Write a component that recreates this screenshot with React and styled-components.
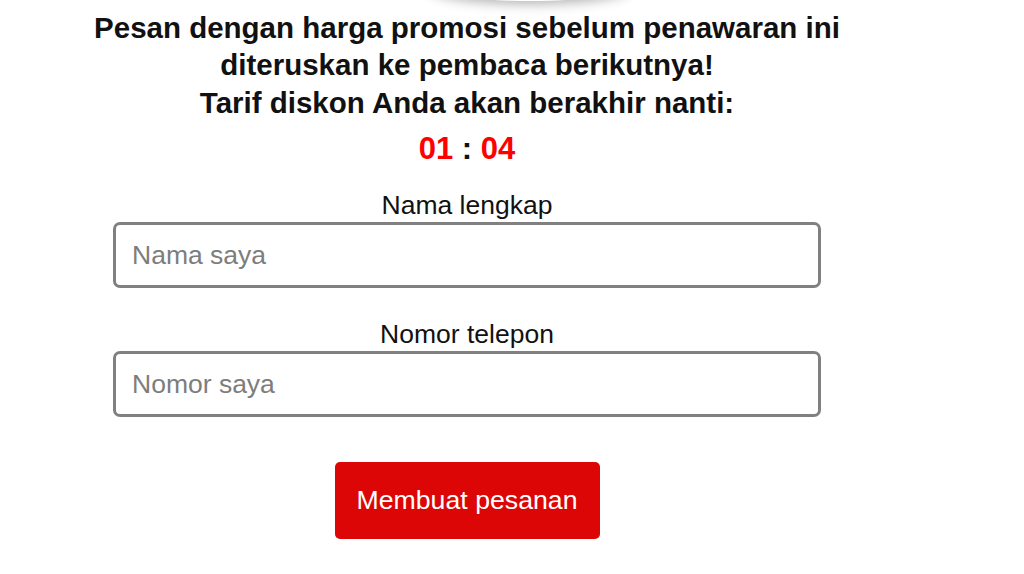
import React from "react";
import styled, { createGlobalStyle } from "styled-components";

const Global = createGlobalStyle`
  html, body {
    margin: 0;
    padding: 0;
    background: #fff;
    font-family: "Liberation Sans", Arial, sans-serif;
    overflow: hidden;
  }
`;

const Page = styled.div`
  width: 800px;
  margin-left: 67px;
  display: flex;
  flex-direction: column;
  align-items: center;
`;

const Shade = styled.div`
  width: 200px;
  height: 30px;
  margin-top: -29px;
  margin-left: 126px;
  border-radius: 50%;
  background: #fff;
  box-shadow: 0 3px 12px rgba(0, 0, 0, 0.3);
`;

const Heading = styled.h2`
  margin: 8px 0 0;
  font-size: 29.5px;
  font-weight: bold;
  line-height: 37px;
  color: #111;
  text-align: center;
`;

const Sub = styled.p`
  margin: 1px 0 0;
  font-size: 29.5px;
  font-weight: bold;
  line-height: 37px;
  color: #111;
  text-align: center;
`;

const Timer = styled.div`
  margin-top: 10px;
  font-size: 31px;
  font-weight: bold;
  line-height: 36px;
  color: #111;
`;

const Digits = styled.span`
  color: #f00;
`;

const Form = styled.form`
  margin-top: 23px;
  display: flex;
  flex-direction: column;
  align-items: center;
`;

const Field = styled.label`
  display: flex;
  flex-direction: column;
  align-items: center;
  margin-bottom: 31px;
`;

const Caption = styled.span`
  font-size: 26.5px;
  line-height: 30px;
  color: #111;
`;

const Input = styled.input`
  box-sizing: border-box;
  width: 708px;
  height: 66px;
  margin-top: 2px;
  padding: 0 16px;
  border: 3px solid #808080;
  border-radius: 7px;
  font-family: "Liberation Sans", Arial, sans-serif;
  font-size: 26.5px;
  color: #111;
  outline: none;

  &::placeholder {
    color: #7d7d7d;
  }
`;

const Submit = styled.button`
  margin-top: 14px;
  width: 265px;
  height: 77px;
  border: none;
  border-radius: 5px;
  background: #dd0606;
  color: #fff;
  font-family: "Liberation Sans", Arial, sans-serif;
  font-size: 26.7px;
  cursor: pointer;
`;

export default function App() {
  return (
    <>
      <Global />
      <Page>
        <Shade />
        <Heading>
          Pesan dengan harga promosi sebelum penawaran ini
          <br />
          diteruskan ke pembaca berikutnya!
        </Heading>
        <Sub>Tarif diskon Anda akan berakhir nanti:</Sub>
        <Timer>
          <Digits>01</Digits> : <Digits>04</Digits>
        </Timer>
        <Form onSubmit={(e) => e.preventDefault()}>
          <Field>
            <Caption>Nama lengkap</Caption>
            <Input placeholder="Nama saya" />
          </Field>
          <Field>
            <Caption>Nomor telepon</Caption>
            <Input placeholder="Nomor saya" />
          </Field>
          <Submit type="submit">Membuat pesanan</Submit>
        </Form>
      </Page>
    </>
  );
}
